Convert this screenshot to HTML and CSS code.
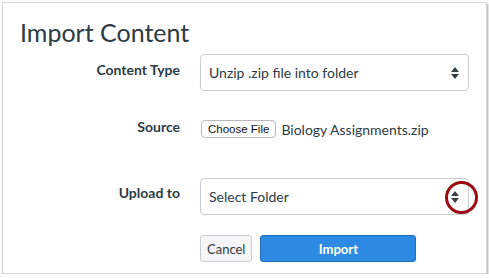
FILE: index.html
```html
<!DOCTYPE html>
<html lang="en">
<head>
<meta charset="UTF-8" />
<title>Import Content</title>
<link rel="stylesheet" href="styles.css">
</head>
<body>
  <div class="frame">
    <h1>Import Content</h1>

    <div class="row type">
      <div class="label">Content Type</div>
      <div class="select">
        <span>Unzip .zip file into folder</span>
        <span class="arrows"><i class="up"></i><i class="down"></i></span>
      </div>
    </div>

    <div class="row source">
      <div class="label">Source</div>
      <div class="file-row">
        <span class="file-btn">Choose File</span>
        <span class="file-name">Biology Assignments.zip</span>
      </div>
    </div>

    <div class="row upload">
      <div class="label">Upload to</div>
      <div class="select">
        <span>Select Folder</span>
        <span class="arrows"><i class="up"></i><i class="down"></i></span>
        <span class="ring"></span>
      </div>
    </div>

    <div class="row actions">
      <div class="label"></div>
      <div class="buttons">
        <button class="btn">Cancel</button>
        <button class="btn primary">Import</button>
      </div>
    </div>
  </div>
</body>
</html>
```

FILE: styles.css
```css
:root {
  --text: #2d3b45;
  --border: #c7cdd1;
  --blue: #2d8ae3;
  --font: Lato, 'Open Sans', sans-serif;
}

* {
  box-sizing: border-box;
}

html,
body {
  margin: 0;
  padding: 0;
  background: #fff;
  font-family: var(--font);
  color: var(--text);
}

.frame {
  margin: 2px 0 0 2px;
  width: 485px;
  height: 272px;
  border: 1px solid #d6d6d6;
  box-shadow: 1px 2px 2px rgba(0, 0, 0, 0.35);
  padding: 13px 0 0 17px;
}

h1 {
  margin: 0;
  font-size: 25px;
  font-weight: 400;
  line-height: 32px;
}

/* ------------ FORM ------------- */
.row {
  display: grid;
  grid-template-columns: 160px 269px;
  column-gap: 20px;
  align-items: start;
}
.row.type { margin-top: 6px; }
.row.source { margin-top: 30px; }
.row.upload { margin-top: 41px; }
.row.actions { margin-top: 20px; }

.label {
  text-align: right;
  font-size: 14px;
  line-height: 17px;
  font-weight: 700;
}
.type .label { padding-top: 7px; }
.source .label { margin-top: -3px; }
.upload .label { padding-top: 6px; }

.select {
  position: relative;
  height: 37px;
  border: 1px solid var(--border);
  border-radius: 4px;
  display: flex;
  align-items: center;
  justify-content: space-between;
  padding: 0 9px 0 8px;
  font-size: 14px;
}

.arrows {
  display: flex;
  flex-direction: column;
  gap: 2px;
}
.arrows i {
  width: 0;
  height: 0;
  border-left: 4px solid transparent;
  border-right: 4px solid transparent;
}
.arrows .up { border-bottom: 5px solid #3a3f44; }
.arrows .down { border-top: 5px solid #3a3f44; }

.ring {
  position: absolute;
  right: -10px;
  top: 50%;
  width: 33px;
  height: 33px;
  margin-top: -16px;
  border: 3.5px solid #9b0c12;
  border-radius: 50%;
}

.file-row {
  display: flex;
  align-items: center;
  gap: 5px;
  height: 16px;
}
.file-btn {
  font-family: 'Liberation Sans', Arial, sans-serif;
  font-size: 11.5px;
  line-height: 14px;
  color: #111;
  border: 1px solid #b9b9b9;
  border-radius: 4px;
  padding: 1px 6px;
  background: #fff;
  margin-left: 1px;
}
.file-name {
  font-size: 14px;
}

.buttons {
  display: flex;
  gap: 8px;
}

.btn {
  height: 27px;
  padding: 0 6px;
  font-family: var(--font);
  font-size: 13px;
  color: var(--text);
  background: #f5f5f5;
  border: 1px solid #c7cdd1;
  border-radius: 3px;
}
.btn.primary {
  width: 156px;
  background: var(--blue);
  border-color: #1f6fbf;
  color: #fff;
  font-weight: 700;
}
```
